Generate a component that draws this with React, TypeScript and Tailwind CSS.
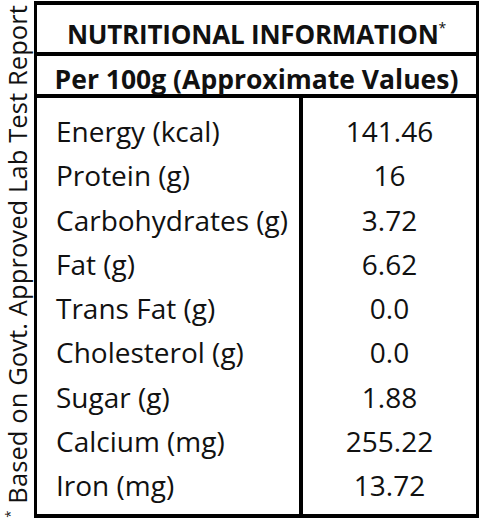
import React from 'react';

// Nutrition rows shown in the table body
const rows = [
  { label: 'Energy (kcal)', value: '141.46' },
  { label: 'Protein (g)', value: '16' },
  { label: 'Carbohydrates (g)', value: '3.72' },
  { label: 'Fat (g)', value: '6.62' },
  { label: 'Trans Fat (g)', value: '0.0' },
  { label: 'Cholesterol (g)', value: '0.0' },
  { label: 'Sugar (g)', value: '1.88' },
  { label: 'Calcium (mg)', value: '255.22' },
  { label: 'Iron (mg)', value: '13.72' },
];

const App = () => {
  return (
    <div
      className="flex w-[480px] h-[523px] bg-white text-[#111] overflow-hidden"
      style={{ fontFamily: '"Open Sans", "Noto Sans", sans-serif' }}
    >
      {/* Footnote running up the left edge */}
      <div className="w-[34px] flex items-center justify-center">
        <p className="[writing-mode:vertical-rl] rotate-180 text-[25.5px] leading-none whitespace-nowrap tracking-[0.1px]">
          <span className="text-[13px] align-middle">*</span> Based on Govt. Approved Lab Test Report
        </p>
      </div>

      {/* Table */}
      <div className="mt-px mb-[5px] mr-px flex-1 flex flex-col border-x-[3px] border-y-4 border-black">
        <div className="h-[51px] pt-[10px] flex items-center justify-center border-b-4 border-black">
          <h1 className="font-bold text-[26px] leading-none tracking-[-0.2px]">
            NUTRITIONAL INFORMATION<span className="text-[14px] align-top font-normal">*</span>
          </h1>
        </div>
        <div className="h-[42px] pt-[8px] flex items-center justify-center border-b-4 border-black">
          <h2 className="font-bold text-[26.5px] leading-none">Per 100g (Approximate Values)</h2>
        </div>
        <div className="flex-1 flex">
          <div className="w-[266px] border-r-4 border-black pl-[19px] pt-[11px]">
            {rows.map((row) => (
              <div key={row.label} className="h-[44.25px] text-[28px] leading-[44px] whitespace-nowrap">
                {row.label}
              </div>
            ))}
          </div>
          <div className="flex-1 pt-[11px]">
            {rows.map((row) => (
              <div key={row.label} className="h-[44.25px] text-[28px] leading-[44px] text-center">
                {row.value}
              </div>
            ))}
          </div>
        </div>
      </div>
    </div>
  );
};

export default App;
